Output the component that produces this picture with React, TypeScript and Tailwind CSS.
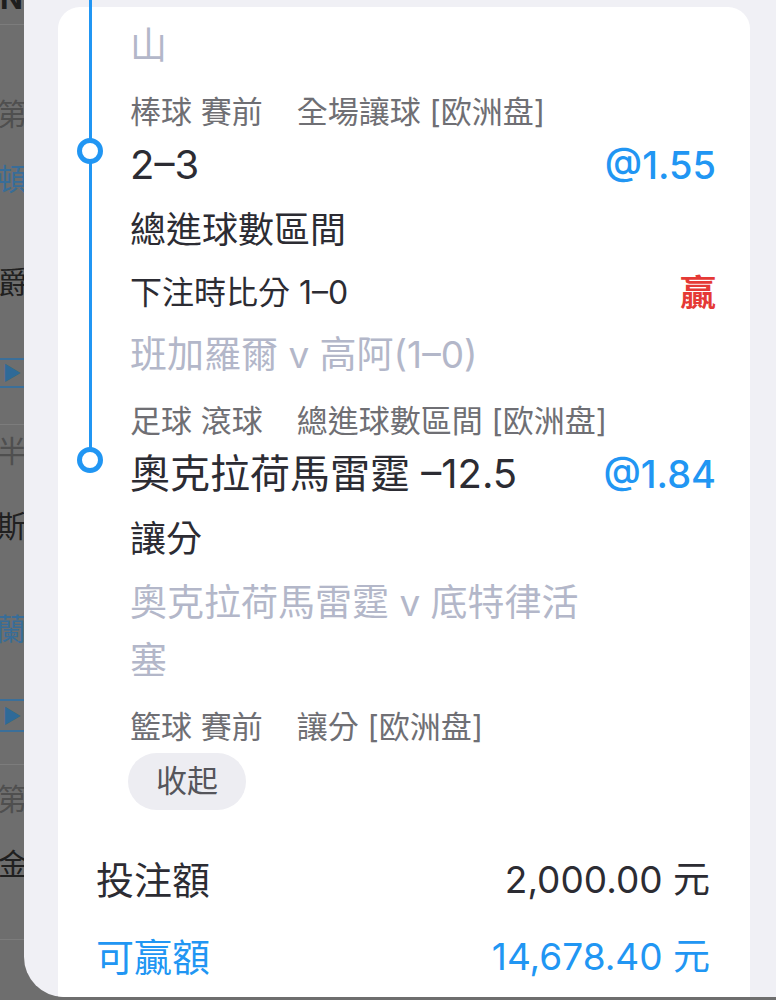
import React from "react";

type Bet = {
  selection: string;
  odds: string;
  market: string;
  score?: string;
  result?: string;
  match: string[];
  sport: string;
  betType: string;
};

const BETS: Bet[] = [
  {
    selection: "2–3",
    odds: "@1.55",
    market: "總進球數區間",
    score: "下注時比分 1–0",
    result: "贏",
    match: ["班加羅爾 v 高阿(1–0)"],
    sport: "足球 滾球",
    betType: "總進球數區間 [欧洲盘]",
  },
  {
    selection: "奧克拉荷馬雷霆 –12.5",
    odds: "@1.84",
    market: "讓分",
    match: ["奧克拉荷馬雷霆 v 底特律活", "塞"],
    sport: "籃球 賽前",
    betType: "讓分 [欧洲盘]",
  },
];

// dimmed page content peeking out on the left of the sheet
function Backdrop() {
  return (
    <div className="flex h-full w-[24px] shrink-0 flex-col overflow-hidden whitespace-nowrap text-[30px] leading-[40px]">
      <div className="-mt-[22px] h-[46px] font-bold text-[#1e1e1e]">NEW</div>
      <div className="h-px bg-[#7c7c7c]" />
      <div className="mt-[69px] -ml-[3px] text-[#4f4f4f]">第二節</div>
      <div className="mt-[25px] -ml-[3px] text-[#386d98]">頓巴斯</div>
      <div className="mt-[63px] -ml-[2px] text-[#202020]">爵士隊</div>
      <div className="mt-[56px] flex h-[30px] items-center border-y-2 border-[#3b6f99]">
        <span className="ml-[3px] text-[20px] leading-none text-[#2f6a98]">▶</span>
      </div>
      <div className="mt-[36px] h-px bg-[#7c7c7c]" />
      <div className="mt-[6px] -ml-[3px] text-[#4f4f4f]">半場</div>
      <div className="mt-[35px] -ml-[4px] text-[#202020]">斯巴達</div>
      <div className="mt-[63px] -ml-[4px] text-[#386d98]">蘭斯</div>
      <div className="mt-[50px] flex h-[33px] items-center border-y-2 border-[#3b6f99]">
        <span className="ml-[3px] text-[20px] leading-none text-[#2f6a98]">▶</span>
      </div>
      <div className="mt-[32px] h-px bg-[#7c7c7c]" />
      <div className="mt-[14px] -ml-[3px] text-[#4f4f4f]">第三節</div>
      <div className="mt-[25px] -ml-[2px] text-[#202020]">金塊</div>
      <div className="mt-[55px] h-px bg-[#7c7c7c]" />
    </div>
  );
}

function Meta({ sport, betType }: { sport: string; betType: string }) {
  return (
    <div className="mt-[17px] text-[31px] leading-[40px] text-[#6f6f74]">
      <span>{sport}</span>
      <span className="ml-[34px]">{betType}</span>
    </div>
  );
}

function Dot() {
  return (
    <div className="absolute -left-[53px] -top-[3px] h-[26px] w-[26px] rounded-full border-[5px] border-[#2196f3] bg-white" />
  );
}

function BetItem({ bet }: { bet: Bet }) {
  return (
    <div>
      <div className="relative mt-[9px] flex h-[48px] items-center justify-between">
        <Dot />
        <span className="text-[40px] leading-[48px] text-[#2c2c33]">{bet.selection}</span>
        <span className="text-[38px] font-medium leading-[48px] text-[#2196f3]">{bet.odds}</span>
      </div>
      <div className="mt-[17px] text-[36px] leading-[48px] text-[#2c2c33]">{bet.market}</div>
      {bet.score && (
        <div className="mt-[17px] flex h-[44px] items-center justify-between">
          <span className="text-[32px] text-[#2c2c33]">{bet.score}</span>
          <span className="text-[36px] font-bold text-[#e53935]">{bet.result}</span>
        </div>
      )}
      <div className="mt-[11px] text-[37px] leading-[58px] text-[#b3b7c9]">
        {bet.match.map((line) => (
          <div key={line}>{line}</div>
        ))}
      </div>
      <Meta sport={bet.sport} betType={bet.betType} />
    </div>
  );
}

export default function App() {
  return (
    <div className="flex h-[1000px] w-[776px] overflow-hidden bg-[#6e6e6e] font-[Inter,'Noto_Sans_CJK_TC',sans-serif]">
      <Backdrop />

      <div className="flex h-[997px] flex-1 flex-col overflow-hidden rounded-bl-[40px] bg-[#f0f0f5] pl-[34px] pr-[26px] pt-[7px]">
        <div className="relative flex flex-1 flex-col rounded-t-[22px] bg-white">
          {/* timeline rail */}
          <div className="absolute -top-[7px] left-[31px] h-[448px] w-[3px] bg-[#2196f3]" />

          <div className="relative pl-[72px] pr-[34px] pt-[10px]">
            {/* tail of the previous bet, scrolled up */}
            <div className="text-[37px] leading-[58px] text-[#b3b7c9]">山</div>
            <Meta sport="棒球 賽前" betType="全場讓球 [欧洲盘]" />

            {BETS.map((bet) => (
              <BetItem key={bet.odds} bet={bet} />
            ))}

            <button className="-ml-[2px] mt-[6px] flex h-[57px] w-[118px] items-center justify-center rounded-full bg-[#ededf2] text-[31px] text-[#55555b]">
              收起
            </button>
          </div>

          <div className="mt-[44px] flex flex-col gap-[25px] pl-[38px] pr-[40px] text-[38px] leading-[52px]">
            <div className="flex items-center justify-between text-[#2c2c33]">
              <span>投注額</span>
              <span className="text-[37px]">2,000.00 元</span>
            </div>
            <div className="flex items-center justify-between text-[#2196f3]">
              <span>可贏額</span>
              <span className="text-[37px]">14,678.40 元</span>
            </div>
          </div>
        </div>
      </div>
    </div>
  );
}
